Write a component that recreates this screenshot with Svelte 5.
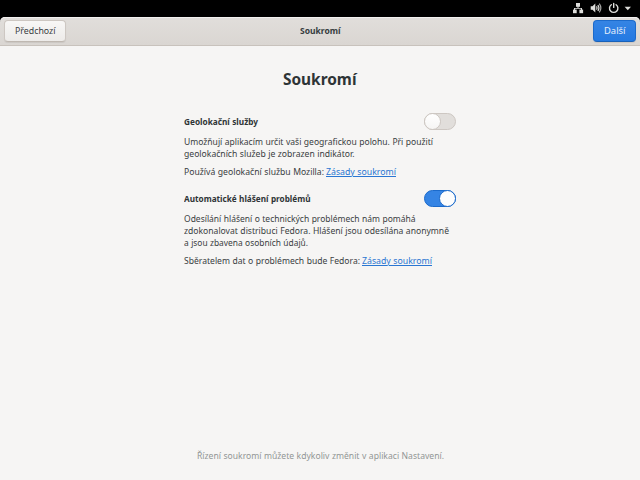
<script>
  const sections = [
    {
      title: 'Geolokační služby', width: 74, on: false,
      lines: [
        ['Umožňují aplikacím určit vaši geografickou polohu. Při použití', 249],
        ['geolokačních služeb je zobrazen indikátor.', 170.5]
      ],
      source: ['Používá geolokační službu Mozilla:', 140]
    },
    {
      title: 'Automatické hlášení problémů', width: 126.5, on: true,
      lines: [
        ['Odesílání hlášení o technických problémech nám pomáhá', 231.5],
        ['zdokonalovat distribuci Fedora. Hlášení jsou odesílána anonymně', 265],
        ['a jsou zbavena osobních údajů.', 124]
      ],
      source: ['Sběratelem dat o problémech bude Fedora:', 176]
    }
  ];

  // Condenses a label so that it fills the given width.
  function fit(node, width) {
    const natural = node.getBoundingClientRect().width;
    node.style.transform = `scaleX(${width / natural})`;
    node.style.marginRight = `${width - natural}px`;
  }
</script>

<div class="screen">
  <div class="topbar">
    <svg width="12" height="12" viewBox="0 0 12 12" fill="#dededb">
      <rect x="4" y="1" width="4" height="3.8" /><rect x="1" y="7.6" width="3.7" height="3.6" /><rect x="7.4" y="7.6" width="3.7" height="3.6" />
      <path d="M5.5 4h1v2H10v2H9V6.8H3V8H2V6h3.5z" />
    </svg>
    <svg class="volume" width="12" height="12" viewBox="0 0 12 12" fill="none" stroke="#dededb">
      <path d="M.7 4.2h1.8L5.3 1.4v9.2L2.5 7.8H.7z" fill="#dededb" stroke="none" />
      <path d="M6.5 4.3q1.2 1.7 0 3.4M7.9 3q2.1 3 0 6" stroke-width="1.2" />
      <path d="M9.3 1.6q3.1 4.4 0 8.8" stroke="#a4a4a2" stroke-width="1.2" />
    </svg>
    <svg class="power" width="12" height="12" viewBox="0 0 12 12" fill="none" stroke="#dededb" stroke-width="1.4" stroke-linecap="round">
      <path d="M3.3 2.7a4.2 4.2 0 1 0 4.8 0M5.7 1.4v4" />
    </svg>
    <svg class="caret" width="8" height="12" viewBox="0 0 8 12"><path d="M.6 4.8h6.4L3.8 8.3z" fill="#dededb" /></svg>
  </div>
  <header>
    <button><span use:fit={40.5}>Předchozí</span></button>
    <h2><span use:fit={40.5}>Soukromí</span></h2>
    <button class="next"><span use:fit={21.5}>Další</span></button>
  </header>
  <main>
    <h1><span use:fit={73.5}>Soukromí</span></h1>
    <div class="content">
      {#each sections as s}
        <section>
          <div class="row">
            <h3><span use:fit={s.width}>{s.title}</span></h3>
            <div class="switch" class:on={s.on}><i></i></div>
          </div>
          <div class="text">
            {#each s.lines as [line, width]}
              <div><span use:fit={width}>{line}</span></div>
            {/each}
          </div>
          <div class="source"><span use:fit={s.source[1]}>{s.source[0]}</span><a href="#privacy" use:fit={70}>Zásady soukromí</a></div>
        </section>
      {/each}
    </div>
    <footer><span use:fit={247}>Řízení soukromí můžete kdykoliv změnit v aplikaci Nastavení.</span></footer>
  </main>
</div>

<style>
  :global(body) { background: #000; }
  .screen {
    width: 640px; height: 480px; display: flex; flex-direction: column;
    overflow: hidden; background: #000; color: #3a4042;
    font: 9.8px/12px "Noto Sans", sans-serif;
  }
  span, a { display: inline-block; white-space: nowrap; flex: none; word-spacing: .3px; transform-origin: 0 50%; }
  .topbar { height: 17px; flex: none; display: flex; justify-content: flex-end; padding: 2px 8px 0 0; box-sizing: border-box; }
  .volume { margin-left: 6px; }
  .power { margin-left: 6px; }
  .caret { margin-left: 4px; }
  header {
    height: 29px; flex: none; box-sizing: border-box; display: grid; grid-template-columns: 1fr auto 1fr; align-items: center;
    padding: 0 4px; border-bottom: 1px solid #c8c2bc; border-radius: 5px 5px 0 0;
    background: linear-gradient(#e1dedb, #dad6d2); box-shadow: inset 0 1px #f2f0ef;
  }
  button {
    width: 62px; height: 22px; box-sizing: border-box; padding: 0; font: inherit; color: #3a4042;
    border: 1px solid #cdc7c2; border-bottom-color: #bfb8b1; border-radius: 4px;
    background: linear-gradient(#f8f7f6, #edebe9); box-shadow: 0 1px 1px #00000012;
    display: flex; align-items: center; justify-content: center;
  }
  .next { justify-self: end; width: 43px; color: #e6effb; border-color: #1b6acb; border-bottom-color: #1961b9; background: linear-gradient(#3584e4, #2379e2); }
  h1, h2, h3 { margin: 0; font-weight: 700; }
  h2 { font-size: 9.6px; line-height: 12px; color: #363c3e; }
  main { flex: 1; background: #f6f5f4; display: flex; flex-direction: column; align-items: center; }
  h1 { margin-top: 22px; font-size: 16px; line-height: 22px; color: #2e3436; }
  .content { width: 272px; margin-top: 22px; }
  section { height: 77px; }
  .row { height: 18px; display: flex; justify-content: space-between; align-items: center; }
  h3 { font-size: 9.6px; line-height: 12px; color: #2e3436; padding-top: 2px; }
  .switch {
    width: 32px; height: 17px; box-sizing: border-box; border-radius: 9px;
    border: 1px solid #cdc7c2; background: #e1dedb; display: flex;
  }
  .switch i {
    width: 17px; height: 17px; box-sizing: border-box; margin: -1px; border-radius: 50%;
    border: 1px solid #cdc7c2; background: linear-gradient(#fff, #f6f5f4);
  }
  .switch.on { justify-content: flex-end; background: #3584e4; border-color: #1b6acb; }
  .switch.on i { border-color: #1b6acb; background: #fdfdfd; }
  .text { margin-top: 6px; }
  .text div, .source { height: 12px; display: flex; }
  .source { margin-top: 6px; gap: 2px; }
  a { color: #2a76d2; text-decoration: underline; text-underline-offset: 1px; text-decoration-thickness: 1px; }
  footer { margin-top: auto; margin-bottom: 18px; color: #929595; height: 12px; }
</style>
